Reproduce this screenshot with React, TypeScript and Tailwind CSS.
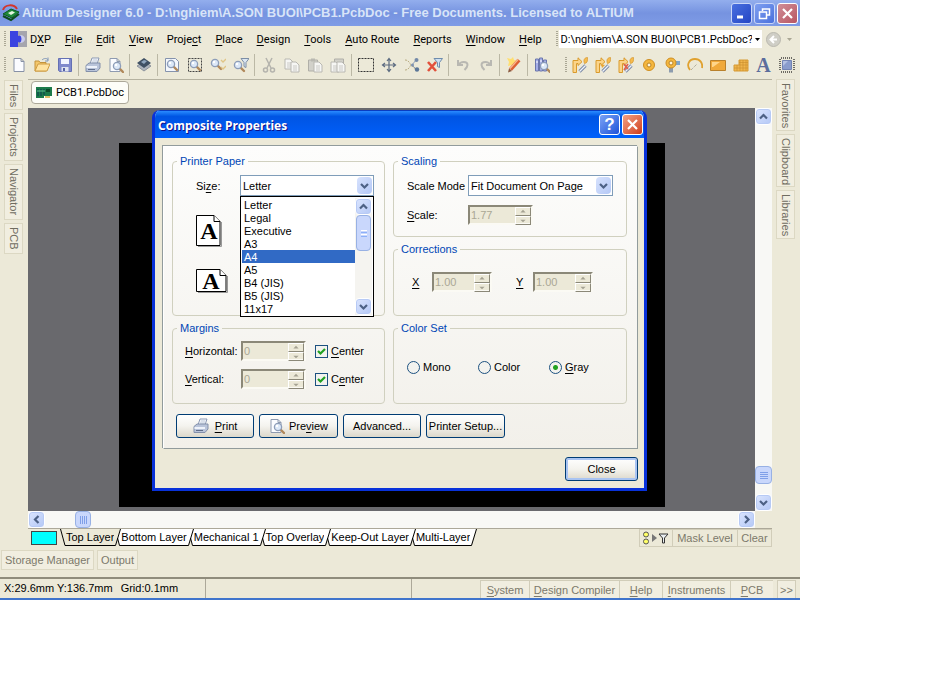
import React, { useState } from "react";

const menus: [string, number][] = [
  ["DXP", 1],
  ["File", 0],
  ["Edit", 0],
  ["View", 0],
  ["Project", 5],
  ["Place", 0],
  ["Design", 0],
  ["Tools", 0],
  ["Auto Route", 0],
  ["Reports", 0],
  ["Window", 0],
  ["Help", 0],
];

const papers = ["Letter", "Legal", "Executive", "A3", "A4", "A5", "B4 (JIS)", "B5 (JIS)", "11x17"];
const layers = ["Top Layer", "Bottom Layer", "Mechanical 1", "Top Overlay", "Keep-Out Layer", "Multi-Layer"];

const lens = (x: number, y: number) => (
  <g>
    <path d={`M${x + 3} ${y + 3}l3 3`} stroke="#b0885a" strokeWidth="2.4" strokeLinecap="round" />
    <circle cx={x} cy={y} r="3.6" fill="#dce8f8" stroke="#8d9db8" strokeWidth="1.3" />
    <circle cx={x - 1} cy={y - 1} r="1.2" fill="#fff" />
  </g>
);

const route = (
  <g>
    <path d="M1 15.500V3.500h5V.8l4 3.900-4 3.800V6.500H4.500v9z" fill="#fbd48a" stroke="#d99a2c" />
    <path d="M7.500 14.500l6-6" stroke="#7c8aa6" strokeWidth="3.200" />
    <path d="M7.500 14.500l6-6" stroke="#eef3fb" strokeWidth="1.200" />
    <path d="M15.500 .5c-3 0-4.500 2.500-3 6c2.500 0 3.500-3 3-6z" fill="#f6bb4e" stroke="#cf8e23" strokeWidth=".6" />
  </g>
);

const sheet = (x: number, y: number, fill = "#f6f6f4", stroke = "#b9b8b2") => (
  <g>
    <path d={`M${x} ${y}h5l3 3v7h-8z`} fill={fill} stroke={stroke} />
    <path d={`M${x + 2} ${y + 4}h4M${x + 2} ${y + 6}h4M${x + 2} ${y + 8}h4`} stroke={stroke} strokeWidth=".7" />
  </g>
);

const glyphs: Record<string, React.ReactNode> = {
  new: <path d="M3 1.500h7l3 3v10H3zM10 1.500v3h3" fill="#fbfcff" stroke="#8791a6" />,
  open: (
    <g>
      <path d="M1 14V4h4l1 1.500h6V14z" fill="#f4c76b" stroke="#c4933c" />
      <path d="M1 14l3-7h12l-3 7z" fill="#ffe3a0" stroke="#cf9c42" />
      <path d="M8 3c2-2 5-2 6 0m0-2.500V4h-3" fill="none" stroke="#7f95b8" />
    </g>
  ),
  save: (
    <g>
      <path d="M1.500 1.500h13v13h-12l-1-1z" fill="#8089cc" stroke="#6470b4" />
      <path d="M4 2h8v5H4z" fill="#f3f5ff" />
      <path d="M4.500 10h7v4.500h-7z" fill="#e0e4f0" />
      <path d="M6 11h2v3H6z" fill="#5561a4" />
    </g>
  ),
  print: (
    <g>
      <path d="M5 7l2-6h7l-2 6z" fill="#fff" stroke="#8a98b4" />
      <path d="M7.500 3h5M7 5h5" stroke="#b3c0d6" />
      <path d="M1 8.500l3-2.500h11v5l-3 3.500H1z" fill="#b9c4da" stroke="#8390aa" />
      <path d="M1.500 9h10.500v2H1.500z" fill="#eef2fa" />
      <path d="M3 12.500h7" stroke="#5f6c88" />
    </g>
  ),
  preview: (
    <g>
      <path d="M2 1.500h7l3 3v10H2zM9 1.500v3h3" fill="#fbfcff" stroke="#8e9ab0" />
      {lens(9, 9)}
    </g>
  ),
  layers: (
    <g>
      <path d="M1 9l7-4 7 4-7 5z" fill="#aeb4bd" stroke="#8d939c" />
      <path d="M1 6l7-5 7 5-7 5z" fill="#3f5064" />
      <path d="M5 5l3-2 3 1-3 3z" fill="#8fa6bf" />
    </g>
  ),
  zoomDoc: (
    <g>
      <path d="M1.500 1.500h10l3 3v10h-13z" fill="#f4f7fc" stroke="#8593ad" />
      {lens(7, 7)}
    </g>
  ),
  zoomArea: (
    <g>
      <path d="M1.500 1.500h13v13h-13z" fill="none" stroke="#444" strokeDasharray="2 1" />
      {lens(7, 7)}
    </g>
  ),
  zoomSel: (
    <g>
      {lens(5, 6)}
      <path d="M11 3l2 2 3-3M11 10l2 2 3-3" fill="none" stroke="#e0c486" strokeWidth="1.300" />
    </g>
  ),
  zoomFilter: (
    <g>
      {lens(5, 8)}
      <path d="M8 1.500h8l-3 4v5l-2-1V5.500z" fill="#dbe6f2" stroke="#7c8ea6" />
    </g>
  ),
  cut: (
    <g fill="none" stroke="#b4b3ad" strokeWidth="1.500">
      <path d="M5 1l5 10M11 1L6 11" />
      <circle cx="4.500" cy="13" r="2" />
      <circle cx="11.500" cy="13" r="2" />
    </g>
  ),
  copy: <g>{sheet(1, 2)}{sheet(7, 5)}</g>,
  paste: (
    <g>
      <path d="M1.500 3h9v11h-9z" fill="#d2d1ca" stroke="#b0afa8" />
      <path d="M4 1.500h4v3H4z" fill="#b9b8b1" />
      {sheet(7, 5)}
    </g>
  ),
  pasteMany: (
    <g>
      <path d="M4.500 2h9v11h-9z" fill="#d2d1ca" stroke="#b0afa8" />
      {sheet(1, 5)}
      {sheet(7, 5)}
    </g>
  ),
  select: <path d="M.5 1.500h15v13H.5z" fill="none" stroke="#333" strokeDasharray="2 1" />,
  move: (
    <path
      d="M8 2v12M2 8h12M6 4l2-2.500L10 4M6 12l2 2.500 2-2.500M4 6L1.500 8 4 10M12 6l2.500 2-2.500 2"
      fill="none"
      stroke="#5c6b80"
      strokeWidth="1.200"
    />
  ),
  crossProbe: (
    <g>
      <path d="M1 3c4 0 5 4 6 5s3 4 6 4M1 13c4 0 5-4 6-5" fill="none" stroke="#b8ab80" strokeDasharray="2 1" />
      <path d="M8 8l4-5M8 8l4 4" stroke="#8fa0b8" />
      <circle cx="12.500" cy="3" r="2" fill="#7389a8" />
      <circle cx="13" cy="12.500" r="2.200" fill="#5b7698" />
      <circle cx="8.500" cy="8" r="1.500" fill="#7d92b0" />
    </g>
  ),
  clearFilter: (
    <g>
      <path d="M7 1.500h8.500l-3 4v5l-2-1V5.500z" fill="#cfe0f0" stroke="#6e8cad" />
      <path d="M1 5l8 9M9 5l-8 9" stroke="#e2503b" strokeWidth="2.600" />
    </g>
  ),
  undo: <path d="M3 3v5h5M3.500 8c2-4 9-4 9 0 0 2-1 3-3 5" fill="none" stroke="#b9b8b2" strokeWidth="2" />,
  redo: <path d="M13 3v5H8M12.500 8c-2-4-9-4-9 0 0 2 1 3 3 5" fill="none" stroke="#b9b8b2" strokeWidth="2" />,
  pencil: (
    <g>
      <path d="M1 1l4 1 2-2 1 3 4 1-3 2 0 4-3-2-4 1 1-4z" fill="#ffdf70" />
      <path d="M4.500 12.500L13 3" stroke="#dd6034" strokeWidth="4" />
      <path d="M4 11.500L12 2.500" stroke="#f8b98c" strokeWidth="1.300" />
      <path d="M2 15.500l1-4 3 2.500z" fill="#8b5a40" />
    </g>
  ),
  books: (
    <g>
      <path d="M1.500 2h3v12h-3zM5.500 1h3v13h-3zM9.500 3h3v11h-3z" fill="#a5aee8" stroke="#6b76ac" />
      <path d="M2 5h2M6 4h2M10 6h2" stroke="#fff" />
      {lens(10, 9)}
    </g>
  ),
  route,
  routeDiff: <g>{route}<path d="M6 7l4 1-3 3z" fill="#e8a533" /></g>,
  routeMulti: <g>{route}<path d="M6 7l4 5M10 7l-4 6" stroke="#e0604e" strokeWidth="1.600" /></g>,
  pad: (
    <g>
      <circle cx="8" cy="8" r="5.500" fill="#f4b73f" stroke="#cf8f22" />
      <circle cx="8" cy="8" r="2" fill="#fff6dd" stroke="#b98222" />
    </g>
  ),
  via: (
    <g>
      <path d="M8 4h8v4H8z" fill="#7fa6cc" />
      <path d="M5 9h4v6.500H5z" fill="#8d9cae" />
      <circle cx="7" cy="6" r="5" fill="#f4b73f" stroke="#cf8f22" />
      <circle cx="7" cy="6" r="2" fill="#fff6dd" stroke="#b98222" />
    </g>
  ),
  arc: (
    <g fill="none">
      <path d="M3 13C-1 8 2 2 8 2c5 0 8 4 7 9" stroke="#e0a12f" strokeWidth="1.800" />
      <path d="M4 13l6-6" stroke="#9a9688" strokeDasharray="1 1" />
    </g>
  ),
  fill: (
    <g>
      <path d="M.5 3.500h15v10H.5z" fill="#f0a93a" stroke="#b9812c" />
      <path d="M2 5h8l-7 5H2z" fill="#ffd68a" />
    </g>
  ),
  polygon: (
    <g>
      <path d="M1 14V8h5V3h9v11z" fill="#f0b64d" stroke="#d69a34" />
      <path d="M1 11h14M6 8h9M6 5.500h9M4 8v6M7 3v11M10 3v11M13 3v11" stroke="#c98d2b" strokeWidth=".6" />
    </g>
  ),
  chip: (
    <g>
      <path d="M2 1h12M2 15h12M1 2v12M15 2v12" stroke="#6d6b64" strokeWidth="2" strokeDasharray="1 1" />
      <path d="M3.500 3.500h9v9h-9z" fill="#8a9ccc" stroke="#7384b4" />
      <path d="M4 4h5l-5 5z" fill="#b3c0e2" />
    </g>
  ),
};

const mainTools = [
  ["new", "open", "save"],
  ["print", "preview"],
  ["layers"],
  ["zoomDoc", "zoomArea", "zoomSel", "zoomFilter"],
  ["cut", "copy", "paste", "pasteMany"],
  ["select", "move", "crossProbe", "clearFilter"],
  ["undo", "redo"],
  ["pencil"],
  ["books"],
];
const wiringTools = ["route", "routeDiff", "routeMulti", "pad", "via", "arc", "fill", "polygon", "text", "chip"];

function Glyph({ name }: { name: string }) {
  if (name === "text") {
    return <span className="font-['Liberation_Serif',serif] text-xl leading-4 font-bold text-[#5b6d9c]">A</span>;
  }
  return (
    <svg viewBox="0 0 16 16" className="h-4 w-4" aria-hidden="true">
      {glyphs[name]}
    </svg>
  );
}

function ToolButton({ name }: { name: string }) {
  return (
    <button type="button" aria-label={name} className="flex h-6 w-[23px] shrink-0 items-center justify-center">
      <Glyph name={name} />
    </button>
  );
}

// Label with its access key underlined
function Keyed({ text, at }: { text: string; at: number }) {
  return (
    <span className="whitespace-nowrap">
      {text.slice(0, at)}
      <span className="underline underline-offset-2 [text-decoration-skip-ink:none]">{text[at]}</span>
      {text.slice(at + 1)}
    </span>
  );
}

function Grip() {
  return (
    <svg width="3" height="16" className="shrink-0" aria-hidden="true">
      <path d="M1 0v16" stroke="#aaa795" strokeWidth="2" strokeDasharray="1 1" />
    </svg>
  );
}

function Arrow({ dir }: { dir: "up" | "down" | "left" | "right" }) {
  const d = {
    up: "M4 9.500l3.500-3.500L11 9.500",
    down: "M4 6l3.500 3.500L11 6",
    left: "M9.500 4L6 7.500 9.500 11",
    right: "M6 4l3.500 3.500L6 11",
  }[dir];
  return (
    <svg viewBox="0 0 15 15" className="h-[15px] w-[15px]" aria-hidden="true">
      <path d={d} fill="none" stroke="#4d6185" strokeWidth="2.200" />
    </svg>
  );
}

function ScrollButton({ dir }: { dir: "up" | "down" | "left" | "right" }) {
  return (
    <button
      type="button"
      aria-label={`Scroll ${dir}`}
      className="flex h-[17px] w-[17px] shrink-0 items-center justify-center overflow-hidden rounded-sm border border-white bg-gradient-to-br from-[#dbe5fe] to-[#b4c8f6] shadow-[inset_0_0_0_1px_#b7caf5]"
    >
      <Arrow dir={dir} />
    </button>
  );
}

function SideTabs({ tabs }: { tabs: [string, string][] }) {
  return (
    <div className="flex w-[19px] flex-col gap-[3px]">
      {tabs.map(([name, size]) => (
        <button
          key={name}
          type="button"
          className={`${size} flex w-[19px] items-center border border-[#dcd8c3] bg-[#f1eee0] px-px pt-[3px] text-[11px] leading-4 text-[#6f6c60] [writing-mode:vertical-rl]`}
        >
          {name}
        </button>
      ))}
    </div>
  );
}

function Spinner({ id, value, label, width }: { id: string; value: string; label: string; width: string }) {
  return (
    <span className={`${width} flex h-5 border-2 border-[#fbfaf4] border-t-[#8b8878] border-l-[#8b8878] bg-[#ece9d8]`}>
      <input
        id={id}
        aria-label={label}
        defaultValue={value}
        disabled
        className="w-0 min-w-0 flex-1 bg-transparent pl-px text-[11px] leading-4 text-[#aaa795]"
      />
      <span className="flex w-4 flex-col">
        {["M4 5l3-3 3 3z", "M4 3l3 3 3-3z"].map((d, i) => (
          <button
            key={d}
            type="button"
            disabled
            aria-label={i ? "Decrease" : "Increase"}
            className="flex flex-1 items-center justify-center border border-white border-r-[#8b8878] border-b-[#8b8878]"
          >
            <svg viewBox="0 0 14 8" className="h-[7px] w-3.5" aria-hidden="true">
              <path d={d} fill="#a5a292" />
            </svg>
          </button>
        ))}
      </span>
    </span>
  );
}

function Combo({ id, options, width }: { id: string; options: string[]; width: string }) {
  return (
    <span className={`${width} flex h-[21px] items-center border border-[#7f9db9] bg-white pr-px`}>
      <select id={id} className="h-[19px] min-w-0 flex-1 appearance-none bg-transparent pl-0.5 text-[11px] leading-4 outline-none">
        {options.map((o) => (
          <option key={o}>{o}</option>
        ))}
      </select>
      <span className="flex h-[17px] w-[15px] items-center justify-center rounded-sm bg-gradient-to-br from-[#d7e2fd] to-[#b4c8f6]">
        <Arrow dir="down" />
      </span>
    </span>
  );
}

function Group({ title, className, children }: { title: string; className: string; children: React.ReactNode }) {
  return (
    <fieldset className={`${className} min-w-0 rounded-[4px] border border-[#d0d0bf]`}>
      <legend className="ml-1 px-[3px] text-[11px] leading-4 text-[#0046b5]">{title}</legend>
      {children}
    </fieldset>
  );
}

function CenterBox({ at }: { at: number }) {
  return (
    <label className="flex items-center gap-[3px]">
      <span className="grid">
        <input
          type="checkbox"
          defaultChecked
          className="col-start-1 row-start-1 h-[13px] w-[13px] appearance-none border border-[#1c5180] bg-[#f3f3ef]"
        />
        <svg viewBox="0 0 13 13" className="pointer-events-none col-start-1 row-start-1 h-[13px] w-[13px]" aria-hidden="true">
          <path d="M3 6l2.500 2.500L10 4" fill="none" stroke="#21a121" strokeWidth="2.200" />
        </svg>
      </span>
      <Keyed text="Center" at={at} />
    </label>
  );
}

function PaperIcon({ wide }: { wide?: boolean }) {
  const w = wide ? 30 : 24;
  const h = wide ? 22 : 30;
  return (
    <svg width={w + 3} height={h + 3} className="overflow-visible" aria-hidden="true">
      <path d={`M2 ${h + 1.5}H${w + 1.5}V7`} fill="none" stroke="#999" strokeWidth="1" />
      <path d={`M.5 .5H${w - 6}l6 6V${h + 0.5}H.5z`} fill="#fff" stroke="#000" />
      <path d={`M${w - 6} .5v6h6`} fill="#fff" stroke="#000" />
      <text
        x={wide ? 15 : 13}
        y={wide ? 20 : 24}
        textAnchor="middle"
        className="font-['Liberation_Serif',serif] text-[24px] font-bold"
      >
        A
      </text>
    </svg>
  );
}

const xpButton =
  "flex h-6 items-center justify-center rounded-[3px] border border-[#003c74] bg-gradient-to-b from-white via-[#f4f3ee] to-[#dcd8cb] whitespace-nowrap";

function PrintDialog() {
  const [paper, setPaper] = useState("A4");
  const [mode, setMode] = useState("Gray");

  return (
    <section
      role="dialog"
      aria-label="Composite Properties"
      className="absolute top-8 left-[152px] w-[495px] overflow-hidden rounded-t-lg border-x-3 border-b-3 border-[#0831d9] bg-[#ece9d8]"
    >
      {/* Caption */}
      <header className="flex h-[28px] items-center gap-0.5 border-t border-[#0a3cc0] bg-gradient-to-b from-[#2a8bff] via-[#0054e3] via-20% to-[#0060fb] pr-px pl-[3px]">
        <h2 className="flex-1 pt-0.5 font-['Noto_Sans',sans-serif] text-xs font-bold text-white [text-shadow:1px_1px_#0f1089]">
          Composite Properties
        </h2>
        <button
          type="button"
          aria-label="Help"
          className="h-[21px] w-[21px] rounded-[3px] border border-white bg-gradient-to-br from-[#7ba2f5] to-[#1e50d8] font-['Liberation_Sans',sans-serif] text-[17px] leading-[18px] font-bold text-white"
        >
          ?
        </button>
        <CloseButton tint="from-[#f0a084] to-[#d03a12]" />
      </header>

      <div className="pt-2 pr-1.5 pb-[7px] pl-2">
        <div className="border border-white border-r-[#919b9c] border-b-[#919b9c] bg-gradient-to-b from-[#fdfdfc] to-[#f2f0ea] pt-1.5 pr-[10px] pb-2.5 pl-2 shadow-[-1px_-1px_#919b9c]">
          <div className="grid grid-cols-[213fr_234fr] gap-2">
            <div className="flex min-w-0 flex-col gap-1">
              <Group title="Printer Paper" className="h-[163px]">
                <div className="flex items-center pt-1.5 pl-[23px]">
                  <label htmlFor="paper" className="w-[44px]">
                    <Keyed text="Size:" at={2} />
                  </label>
                  <div className="relative">
                    <Combo id="paper" options={papers} width="w-[134px]" />
                    <div className="absolute top-[21px] left-0 z-10 flex w-[134px] border border-black bg-white p-px">
                      <ul role="listbox" aria-label="Paper sizes" className="flex-1">
                        {papers.map((p) => (
                          <li
                            key={p}
                            role="option"
                            aria-selected={p === paper}
                            onClick={() => setPaper(p)}
                            className={
                              p === paper
                                ? "h-[13px] bg-[#316ac5] pl-0.5 leading-[14px] text-white"
                                : "h-[13px] pl-0.5 leading-[14px]"
                            }
                          >
                            {p}
                          </li>
                        ))}
                      </ul>
                      <div className="flex w-[17px] flex-col items-center bg-[#f5f4f0]">
                        <ScrollButton dir="up" />
                        <div className="flex h-[36px] w-[15px] flex-col items-center justify-center gap-px rounded-sm border border-[#98b1e4] bg-[#c9d7fc]">
                          <span className="h-px w-1.5 bg-white" />
                          <span className="h-px w-1.5 bg-[#8cb0f8]" />
                          <span className="h-px w-1.5 bg-white" />
                          <span className="h-px w-1.5 bg-[#8cb0f8]" />
                        </div>
                        <div className="flex-1" />
                        <ScrollButton dir="down" />
                      </div>
                    </div>
                  </div>
                </div>
                <div className="flex flex-col gap-[21px] pt-[19px] pl-[23px]">
                  <PaperIcon />
                  <PaperIcon wide />
                </div>
              </Group>
              <Group title="Margins" className="h-[84px]">
                <div className="grid grid-cols-[56px_65px_auto] items-center gap-y-2 pt-[5px] pl-3">
                  <label htmlFor="mh"><Keyed text="Horizontal:" at={0} /></label>
                  <Spinner id="mh" label="Horizontal" value="0" width="w-[65px]" />
                  <div className="pl-[9px]"><CenterBox at={0} /></div>
                  <label htmlFor="mv"><Keyed text="Vertical:" at={0} /></label>
                  <Spinner id="mv" label="Vertical" value="0" width="w-[65px]" />
                  <div className="pl-[9px]"><CenterBox at={1} /></div>
                </div>
              </Group>
            </div>

            <div className="flex min-w-0 flex-col gap-1">
              <Group title="Scaling" className="h-[84px]">
                <div className="grid grid-cols-[61px_auto] items-center gap-y-[9px] pt-1.5 pl-[13px]">
                  <label htmlFor="mode" className="whitespace-nowrap">Scale Mode</label>
                  <Combo id="mode" options={["Fit Document On Page", "Scaled Print"]} width="w-[145px]" />
                  <label htmlFor="scale"><Keyed text="Scale:" at={0} /></label>
                  <Spinner id="scale" label="Scale" value="1.77" width="w-[65px]" />
                </div>
              </Group>
              <Group title="Corrections" className="h-[75px]">
                <div className="flex items-center pt-[15px] pl-[18px]">
                  <label htmlFor="cx" className="w-5"><Keyed text="X" at={0} /></label>
                  <Spinner id="cx" label="X" value="1.00" width="w-[60px]" />
                  <label htmlFor="cy" className="w-[41px] pl-6"><Keyed text="Y" at={0} /></label>
                  <Spinner id="cy" label="Y" value="1.00" width="w-[60px]" />
                </div>
              </Group>
              <Group title="Color Set" className="h-[84px]">
                <div className="flex pt-[23px] pl-[13px]">
                  {["Mono", "Color", "Gray"].map((m) => (
                    <label key={m} className="flex w-[71px] items-center gap-[3px]">
                      <input
                        type="radio"
                        name="colorset"
                        checked={mode === m}
                        onChange={() => setMode(m)}
                        className="h-[13px] w-[13px] appearance-none rounded-full border border-[#1c5180] bg-[#f3f3ef] checked:bg-[radial-gradient(circle,#21a121_0_2px,#f3f3ef_3px)]"
                      />
                      {m === "Gray" ? <Keyed text={m} at={0} /> : m}
                    </label>
                  ))}
                </div>
              </Group>
            </div>
          </div>

          <div className="flex gap-[5px] pt-2.5 pl-1">
            <button type="button" className={`${xpButton} w-[78px] gap-1.5`}>
              <Glyph name="print" />
              <Keyed text="Print" at={0} />
            </button>
            <button type="button" className={`${xpButton} w-[79px] gap-1`}>
              <Glyph name="preview" />
              <Keyed text="Preview" at={3} />
            </button>
            <button type="button" className={`${xpButton} w-[78px]`}>Advanced...</button>
            <button type="button" className={`${xpButton} w-[79px]`}>Printer Setup...</button>
          </div>
        </div>
        <div className="flex justify-end pt-2">
          <button type="button" className={`${xpButton} w-[73px] shadow-[inset_0_0_0_2px_#a9c4f2]`}>
            Close
          </button>
        </div>
      </div>
    </section>
  );
}

function CloseButton({ tint }: { tint: string }) {
  return (
    <button
      type="button"
      aria-label="Close"
      className={`${tint} flex h-[21px] w-[21px] items-center justify-center rounded-[3px] border border-white bg-gradient-to-br`}
    >
      <svg viewBox="0 0 13 13" className="h-[13px] w-[13px]" aria-hidden="true">
        <path d="M2 2l9 9M11 2l-9 9" stroke="#fff" strokeWidth="2.200" />
      </svg>
    </button>
  );
}

// Slanted edge between two layer tabs
function TabEdge({ last, left }: { last?: boolean; left: string }) {
  return (
    <svg viewBox="0 0 7 18" className="h-[18px] w-[7px] shrink-0" aria-hidden="true">
      <path d="M0 0h6L1 16H0z" fill={left} />
      {!last && <path d="M6.500 0H7v16H5.500L3.500 9z" fill="#fff" />}
      <path d="M6.500 0L1.500 16.500H0" fill="none" stroke="#000" />
      {!last && <path d="M3.500 9l2 7.500H7" fill="none" stroke="#000" />}
    </svg>
  );
}

const captionButton = "flex h-[21px] w-[21px] items-center justify-center rounded-[3px] border border-[#c9d6f8] bg-gradient-to-br";

export default function App() {
  return (
    <main className="relative w-full max-w-[800px] bg-[#ece9d8] font-['Liberation_Sans',Arial,sans-serif] text-[11px] leading-4 text-black">
      {/* Title bar */}
      <header className="flex h-[26px] items-center gap-0.5 bg-gradient-to-b from-[#93aeed] via-[#7693e0] to-[#7f9ce6] pr-0.5 pl-0.5">
        <svg viewBox="0 0 18 18" className="h-[18px] w-[18px]" aria-hidden="true">
          <path d="M1 6C3 0 12 0 15 5" fill="none" stroke="#d2362d" strokeWidth="2" />
          <path d="M1 10l8-5 8 3-7 6z" fill="#1f8a3a" stroke="#0d5a22" />
          <path d="M6 9l4-2 3 1.500-4 2.500z" fill="#e5f5df" />
          <path d="M1 12l8 4 8-6" fill="none" stroke="#0d4d1d" strokeWidth="2" />
        </svg>
        <h1 className="min-w-0 flex-1 truncate text-[13px] font-bold text-[#d8e4f8]">
          Altium Designer 6.0 - D:\nghiem\A.SON BUOI\PCB1.PcbDoc - Free Documents. Licensed to ALTIUM
        </h1>
        <button type="button" aria-label="Minimize" className={`${captionButton} from-[#4a6fe0] to-[#2445c4]`}>
          <svg viewBox="0 0 13 13" className="h-[13px] w-[13px]"><path d="M2 10h6" stroke="#fff" strokeWidth="3" /></svg>
        </button>
        <button type="button" aria-label="Restore" className={`${captionButton} from-[#7f9ff0] to-[#4a70dc]`}>
          <svg viewBox="0 0 13 13" className="h-[13px] w-[13px]">
            <path d="M4.500 4V2h7v6H9" fill="none" stroke="#fff" strokeWidth="1.500" />
            <path d="M1.500 5h7v6.500h-7z" fill="none" stroke="#fff" strokeWidth="1.500" />
          </svg>
        </button>
        <CloseButton tint="from-[#cf8e98] to-[#b85562]" />
      </header>

      {/* Menu bar */}
      <nav className="flex h-[26px] items-center pl-1 font-['Roboto',sans-serif]">
        <Grip />
        <svg viewBox="0 0 18 16" className="ml-[3px] h-4 w-[18px] shrink-0" aria-hidden="true">
          <path d="M0 0h17v16H0z" fill="#a5a5ad" />
          <path d="M0 0h8v16H0z" fill="#3a44e0" />
          <path d="M8 5c2-1 4 0 4 3s-2 4-4 3z" fill="#3a44e0" />
          <path d="M10 4c3 0 5 2 5 4s-2 4-5 4c2-2 2-6 0-8z" fill="#c9cbee" />
        </svg>
        <div className="flex shrink-0 gap-3.5 pt-0.5 pr-3.5 pl-0.5">
          {menus.map(([name, at]) => (
            <button key={name} type="button">
              <Keyed text={name} at={at} />
            </button>
          ))}
        </div>
        <div className="flex min-w-0 flex-1 items-center">
          <Grip />
          <div className="flex h-[18px] min-w-0 flex-1 items-center bg-white">
            <input
              aria-label="Document path"
              defaultValue="D:\nghiem\A.SON BUOI\PCB1.PcbDoc?"
              className="min-w-0 flex-1 pt-px pl-0.5 text-[11px] leading-4 outline-none"
            />
            <button type="button" aria-label="Show paths" className="flex w-2.5 justify-center">
              <svg viewBox="0 0 5 3" className="h-[3px] w-[5px]"><path d="M0 0h5L2.500 3z" /></svg>
            </button>
          </div>
          <button type="button" aria-label="Back" className="flex items-center gap-1.5 pr-2 pl-1">
            <svg viewBox="0 0 15 15" className="h-[15px] w-[15px]">
              <circle cx="7.500" cy="7.500" r="7" fill="#cfcec6" stroke="#b9b8ae" />
              <path d="M8 4L4.500 7.500 8 11M5 7.500h6" fill="none" stroke="#fff" strokeWidth="2" />
            </svg>
            <svg viewBox="0 0 5 3" className="h-[3px] w-[5px]"><path d="M0 0h5L2.500 3z" fill="#aaa795" /></svg>
          </button>
        </div>
      </nav>

      {/* Toolbars */}
      <div className="flex h-[26px] items-center overflow-hidden pl-1">
        <Grip />
        {mainTools.map((group, i) => (
          <React.Fragment key={group[0]}>
            {i > 0 && <span className="mx-0.5 h-[22px] w-px shrink-0 bg-[#bbb8a5]" />}
            {group.map((name) => <ToolButton key={name} name={name} />)}
          </React.Fragment>
        ))}
        <span className="w-3" />
        <Grip />
        {wiringTools.map((name) => <ToolButton key={name} name={name} />)}
      </div>

      <div className="relative flex pt-px">
        <aside className="w-7 shrink-0 pt-px pl-1">
          <SideTabs tabs={[["Files", "h-[30px]"], ["Projects", "h-12"], ["Navigator", "h-[56px]"], ["PCB", "h-[31px]"]]} />
        </aside>

        <div className="min-w-0 flex-1 border-t border-[#b5b2a0]">
          <div className="flex h-7 items-start pt-px pl-[3px]">
            <button type="button" className="flex h-[23px] items-center gap-1 rounded-sm border border-[#aca899] bg-[#fdfdf8] px-1">
              <svg viewBox="0 0 16 12" className="h-3 w-4" aria-hidden="true">
                <path d="M0 0h16v9H8v2H0z" fill="#1c7a4a" />
                <path d="M2 2v7M5 2v7M8 2v6" stroke="#0b3d4f" />
                <path d="M10 2h4v3h-4z" fill="#0a4a2a" />
                <path d="M9 10h5" stroke="#d1a93a" strokeWidth="1.500" />
                <path d="M1 4h8" stroke="#5fc48d" />
              </svg>
              <span className="pt-px font-['Roboto',sans-serif]">PCB1.PcbDoc</span>
            </button>
          </div>

          <div className="flex">
            <div className="min-w-0 flex-1 bg-[#69696d] pt-[35px] pr-[90px] pb-1 pl-[91px]">
              <div className="h-[364px] bg-black" />
            </div>
            <div className="flex w-[17px] flex-col bg-[#f8f8f5]">
              <ScrollButton dir="up" />
              <div className="flex-1" />
              <div className="flex h-[18px] w-[17px] flex-col items-center justify-center gap-px rounded-sm border border-[#98b1e4] bg-[#c9d7fc]">
                <span className="h-px w-2 bg-[#7f9fe8]" />
                <span className="h-px w-2 bg-[#7f9fe8]" />
                <span className="h-px w-2 bg-[#7f9fe8]" />
                <span className="h-px w-2 bg-[#7f9fe8]" />
              </div>
              <div className="h-2.5" />
              <ScrollButton dir="down" />
            </div>
          </div>

          <div className="mr-[17px] flex h-[17px] bg-[#f8f8f5]">
            <ScrollButton dir="left" />
            <div className="w-[30px]" />
            <div className="flex h-[17px] w-4 items-center justify-center gap-px rounded-sm border border-[#98b1e4] bg-[#c9d7fc]">
              <span className="h-2 w-px bg-[#7f9fe8]" />
              <span className="h-2 w-px bg-[#7f9fe8]" />
              <span className="h-2 w-px bg-[#7f9fe8]" />
              <span className="h-2 w-px bg-[#7f9fe8]" />
            </div>
            <div className="flex-1" />
            <ScrollButton dir="right" />
          </div>

          {/* Layer tabs */}
          <div className="flex h-[19px] border-t border-[#aca899]">
            <span className="mt-0.5 mr-[3px] ml-[3px] h-3.5 w-[26px] border border-[#444] bg-[#00ffff]" />
            <svg viewBox="0 0 6 18" className="h-[18px] w-1.5" aria-hidden="true">
              <path d="M.5 0l4.500 16.500h1" fill="none" stroke="#000" />
            </svg>
            {layers.map((name, i) => (
              <React.Fragment key={name}>
                <button
                  type="button"
                  className={
                    i === 0
                      ? "h-[17px] border-b border-black bg-[#ece9d8] whitespace-nowrap"
                      : "h-[17px] border-b border-black bg-white whitespace-nowrap"
                  }
                >
                  {name}
                </button>
                <TabEdge last={i === layers.length - 1} left={i === 0 ? "#ece9d8" : "#fff"} />
              </React.Fragment>
            ))}
            <div className="ml-auto flex text-[#7c796b]">
              <button type="button" aria-label="Mask filter" className="flex w-[34px] items-center justify-center border border-[#d1cdb9]">
                <svg viewBox="0 0 28 14" className="h-3.5 w-7">
                  <circle cx="4" cy="3.500" r="2.500" fill="#ffff66" stroke="#555" />
                  <circle cx="4" cy="10.500" r="2.500" fill="#ffff66" stroke="#555" />
                  <path d="M10 3l5 4-5 4z" fill="#777" />
                  <path d="M17 3h9l-3.500 4v5h-2V7z" fill="#e9eef0" stroke="#333" />
                </svg>
              </button>
              <button type="button" className="w-[65px] border border-l-0 border-[#d1cdb9] whitespace-nowrap">Mask Level</button>
              <button type="button" className="w-[34px] border border-l-0 border-[#d1cdb9]">Clear</button>
            </div>
          </div>
        </div>

        <aside className="absolute top-0 right-0 w-6 pt-px">
          <SideTabs tabs={[["Favorites", "h-[52px]"], ["Clipboard", "h-[53px]"], ["Libraries", "h-[49px]"]]} />
        </aside>
        <div className="w-7 shrink-0" />

        <PrintDialog />
      </div>

      {/* Panel tabs */}
      <div className="flex h-[30px] items-start gap-[3px] pt-[3px] pl-px text-[#7c796b]">
        <button type="button" className="h-5 border border-[#dcd8c3] bg-[#f1eee0] px-[3px]">Storage Manager</button>
        <button type="button" className="h-5 border border-[#dcd8c3] bg-[#f1eee0] px-[3px]">Output</button>
      </div>

      {/* Status bar */}
      <footer className="flex h-[23px] border-t-2 border-b-2 border-t-[#8f8c7c] border-b-[#3f74cc]">
        <p className="flex w-[206px] gap-2 border-r border-[#aca899] pt-px pl-1 whitespace-nowrap">
          <span>X:29.6mm Y:136.7mm</span>
          <span>Grid:0.1mm</span>
        </p>
        <span className="w-[206px] border-r border-[#aca899]" />
        <div className="ml-auto flex pt-px pr-1 text-[#7c796b]">
          {[["System", "w-[49px]"], ["Design Compiler", "w-[90px]"], ["Help", "w-[43px]"], ["Instruments", "w-[68px]"], ["PCB", "w-[43px]"]].map(
            ([name, size]) => (
              <button key={name} type="button" className={`${size} border-t border-l border-[#d1cdb9] bg-[#f1eee0]`}>
                <Keyed text={name} at={0} />
              </button>
            ),
          )}
          <button type="button" aria-label="More panels" className="ml-1 w-[19px] border border-b-0 border-[#d1cdb9] bg-[#f1eee0]">
            &gt;&gt;
          </button>
        </div>
      </footer>
    </main>
  );
}
